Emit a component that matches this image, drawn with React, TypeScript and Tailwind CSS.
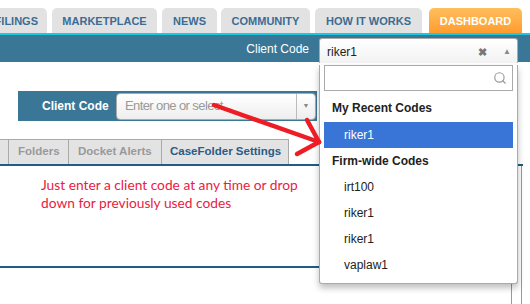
import { Search } from "lucide-react";

const topTabs = [
  { label: "MARKETPLACE", w: "w-[105px]", ml: "ml-[5px]" },
  { label: "NEWS", w: "w-[55px]", ml: "ml-[5px]" },
  { label: "COMMUNITY", w: "w-[89px]", ml: "ml-[4px]" },
  { label: "HOW IT WORKS", w: "w-[107px]", ml: "ml-[5px]" },
];

const firmCodes = ["irt100", "riker1", "riker1", "vaplaw1"];

function ClientCodeMenu() {
  return (
    <div className="absolute left-[319px] top-[38px] w-[199px] text-[12px] text-[#222]">
      <div className="h-[25px] flex items-center pl-[7px] pr-[6px] pt-[2px] rounded-t-[3px] border border-b-0 border-[#aaa] bg-gradient-to-b from-white to-[#f2f2f2]">
        <span className="flex-1">riker1</span>
        <span className="text-[11px] font-bold text-[#777] mr-[16px]">✖</span>
        <span className="text-[8px] text-[#888]">▲</span>
      </div>
      <div className="bg-white border border-t-0 border-[#aaa] rounded-b-[3px] px-[4px] pb-[5px] shadow-[0_4px_6px_rgba(0,0,0,0.25)]">
        <div className="mt-[2px] h-[26px] border border-[#aaa] flex items-center justify-end pr-[5px]">
          <Search size={14} strokeWidth={2} color="#9a9a9a" />
        </div>
        <div className="mt-[4px] h-[26px] flex items-center pl-[8px] font-bold">My Recent Codes</div>
        <div className="mt-[1px] h-[26px] flex items-center pl-[20px] bg-[#3875d7] text-white">riker1</div>
        <div className="h-[26px] flex items-center pl-[8px] font-bold">Firm-wide Codes</div>
        {firmCodes.map((c, i) => (
          <div key={i} className="h-[26px] flex items-center pl-[20px]">
            {c}
          </div>
        ))}
      </div>
    </div>
  );
}

function Arrow() {
  return (
    <svg className="absolute left-0 top-0 pointer-events-none" width="530" height="304">
      <g stroke="#ee1c25" strokeWidth="4.5" strokeLinecap="round" fill="none">
        <path d="M214 105 L319 142" />
        <path d="M307 120 L319 142" />
        <path d="M297 154 L319 142" />
      </g>
    </svg>
  );
}

export default function App() {
  return (
    <div className="relative w-[530px] h-[304px] overflow-hidden bg-white font-['Liberation_Sans',Arial,sans-serif]">
      {/* site nav */}
      <div className="flex items-end h-[33px] pt-[8px]">
        <div className="w-[47px] h-[25px] flex justify-end items-center pt-[2px] pr-[9px] overflow-hidden whitespace-nowrap rounded-tr-[5px] bg-[#e2e2e2] text-[11px] font-bold text-[#3a6d94]">
          FILINGS
        </div>
        {topTabs.map((t) => (
          <div
            key={t.label}
            className={`${t.w} ${t.ml} h-[25px] flex justify-center items-center pt-[2px] rounded-t-[5px] bg-[#e2e2e2] text-[11px] font-bold text-[#3a6d94] whitespace-nowrap`}
          >
            {t.label}
          </div>
        ))}
        <div className="w-[93px] ml-[7px] h-[25px] flex justify-center items-center pt-[2px] rounded-t-[5px] bg-gradient-to-b from-[#ffbe5c] to-[#ff9c2b] text-[11px] font-bold text-white">
          DASHBOARD
        </div>
      </div>
      <div className="h-[2px] bg-[#1ec8e0]" />
      <div className="h-[27px] bg-[#3a7796] flex items-center justify-end pr-[221px] text-[12px] text-white">
        Client Code
      </div>

      {/* page body */}
      <div className="pt-[29px]">
        <div className="ml-[18px] w-[299px] h-[30px] bg-[#3a7796] flex items-center">
          <span className="w-[98px] pl-[24px] text-[12px] font-bold text-white">Client Code</span>
          <div className="flex-1 h-[27px] mr-[1px] flex items-center rounded-[4px] border border-[#aaa] bg-gradient-to-b from-white to-[#eee]">
            <span className="flex-1 pl-[8px] text-[13px] tracking-[-0.6px] text-[#999] whitespace-nowrap overflow-hidden">Enter one or select...</span>
            <span className="w-[19px] h-full flex items-center justify-center border-l border-[#bbb] text-[7px] text-[#888]">▼</span>
          </div>
        </div>

        <div className="mt-[18px] w-[523px] h-[27px] flex border-b-2 border-[#1f5d84] text-[11.5px] font-bold">
          <div className="w-[8px] bg-[#e3e3e3] border-t border-[#a9a9a9]" />
          <div className="w-[60px] pl-[9px] flex items-center bg-[#e3e3e3] border-t border-l border-[#a9a9a9] text-[#999]">Folders</div>
          <div className="w-[93px] pl-[9px] flex items-center bg-[#e3e3e3] border-t border-l border-[#a9a9a9] text-[#999]">Docket Alerts</div>
          <div className="w-[128px] pl-[8px] flex items-center bg-[#e3e3e3] border-t border-x border-[#a9a9a9] text-[#2b5c86]">CaseFolder Settings</div>
        </div>

        <div className="w-[522px] h-[100px] border-r border-[#999]">
          <p className="pl-[41px] pt-[10px] text-[13.75px] leading-[18px] text-[#e9213f] font-['Lato',sans-serif]">
            Just enter a client code at any time or drop
            <br />
            down for previously used codes
          </p>
        </div>
        <div className="flex">
          <div className="w-[512px] h-[40px] border-t-2 border-[#1f5d84] border-r border-r-[#999]" />
          <div className="w-[10px] h-[40px] border-r border-[#999]" />
        </div>
      </div>

      <ClientCodeMenu />
      <Arrow />
    </div>
  );
}
